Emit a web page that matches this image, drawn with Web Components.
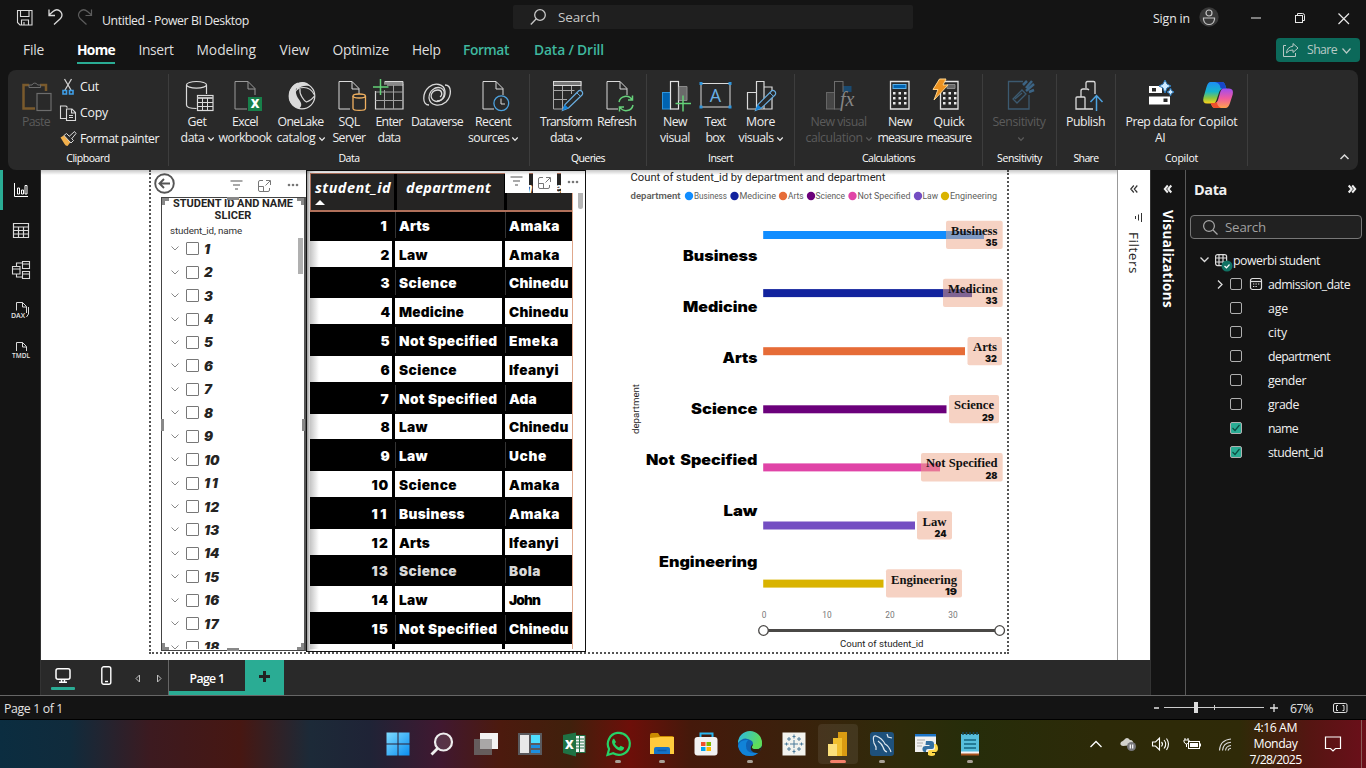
<!DOCTYPE html>
<html lang="en">
<head>
<meta charset="utf-8">
<title>Untitled - Power BI Desktop</title>
<style>
html,body{margin:0;width:1366px;height:768px;overflow:hidden;background:#141414}
body{font-family:"Open Sans","Noto Sans",sans-serif;color:#f2f2f2}
</style>
</head>
<body>
<pbi-app></pbi-app>
<script>
const BASE = `*{box-sizing:border-box}svg{display:block;overflow:visible;flex:none}`;
function define(name, css, html, setup) {
  const t = document.createElement('template');
  customElements.define(name, class extends HTMLElement {
    connectedCallback() {
      if (this.shadowRoot) return;
      const root = this.attachShadow({mode: 'open'});
      t.innerHTML = `<style>${BASE}${css}</style>` + (typeof html === 'function' ? html(this) : html);
      root.appendChild(t.content.cloneNode(true));
      if (setup) setup(this, root);
    }
  });
}

/* ---------- icons ---------- */
const W = 'stroke="#dadada" fill="none"';
const doc = (c = '#dadada') => `<path d="M17 29H6V1.500h13l7 7V15M19 1.500V9h7" fill="none" stroke="${c}"/>`;
const pencil = (x, y) => `<g transform="translate(${x} ${y})"><path d="M0 20l2.500-6L15.500 1a2.300 2.300 0 0 1 4 3.500L6 17.500z" fill="#292929" stroke="#6aaee0" stroke-width="1.200"/><path d="M0 20l2.300-6 3.700 3.600z" fill="#1483d8"/><path d="M14.500 2.500l3.500 3.300" stroke="#6aaee0"/></g>`;
const calc = (x, top) => `<path d="M${x} 1.500h${25 - x}V29H${x}z" fill="none" stroke="#e4e4e4" stroke-width="1.300"/>${top}${[12, 17, 22].map(y => [0, 5.500, 11].map(d => `<rect x="${x + 2.500 + d}" y="${y}" width="2.500" height="2.500" fill="#e8e8e8"/>`).join('')).join('')}`;
const ICONS = {
  paste: `<path d="M9 5H3.500v23.500H15M20 5h6v6" fill="none" stroke="#7a5a2c" stroke-width="2.500"/><path d="M9 7.500V5h3a3 3 0 0 1 5.600 0h3v2.500z" fill="#292929" stroke="#6d6d6d"/><rect x="17" y="13.500" width="14" height="17" fill="#292929" stroke="#6d6d6d" stroke-width="1.200"/>`,
  getdata: `<g fill="none" stroke="#dadada" stroke-width="1.200"><ellipse cx="15.500" cy="4.800" rx="10" ry="3.300"/><path d="M5.500 5v20c0 2 4 3.500 10 3.500M25.500 5v9"/></g><rect x="16.500" y="15.500" width="15.500" height="15" fill="#292929" stroke="#dadada" stroke-width="1.200"/><path d="M16.500 18h15.500" stroke="#bbb" stroke-width="2"/><path d="M16.500 22.500H32M16.500 26.500H32M21.500 18v12M26.500 18v12" stroke="#dadada"/>`,
  excel: doc('#9a9a9a').replace('M17 29H6', 'M18 29H6') + `<rect x="19" y="17" width="14" height="14" fill="#17804a"/><text x="26" y="28.300" text-anchor="middle" font-family="Open Sans" font-weight="800" font-size="12" fill="#fff">X</text>`,
  onelake: `<circle cx="17" cy="16" r="12.800" fill="none" stroke="#dadada" stroke-width="1.200"/><path d="M13 2.500c-3 6-3 12 1 17 3 4 3 7 0 9C7 27 3.500 22 4 15c.5-6 4-11 9-12.500zM10 5c3-3 8-4 12-2l3 3c-5-1-10 0-13 4z" fill="#dadada"/><path d="M10 12c3-5 14-8 19.500 3M15 9c-1 5 4 12 6.500 13 3-1 6-3 8-6" fill="none" stroke="#dadada" stroke-width="1.200"/>`,
  sql: doc() + `<g fill="#292929" stroke="#f0b060" stroke-width="1.300"><path d="M20 16v12.500c0 2.500 12.500 2.500 12.500 0V16"/><ellipse cx="26.200" cy="16" rx="6.200" ry="2"/></g>`,
  enter: `<path d="M2.500 11v18h27.500V5H14" fill="none" stroke="#dadada" stroke-width="1.200"/><path d="M11 3h19" stroke="#8a8a8a" stroke-width="3.500"/><path d="M12 1.500h18V5" ${W}/><path d="M2.500 12H30M2.500 20.500H30M11.500 10v19M20.500 5v24" stroke="#a0a0a0"/><path d="M7.500-1v16M0 7h15.500" stroke="#63d177" stroke-width="1.500"/>`,
  dataverse: `<g fill="none" stroke="#dadada" stroke-width="1.300"><path d="M8 25C1 25 1 13 8 7c6-5 15-3 16 4 1 8-7 13-12 9-4-4-1-10 5-10 4 0 5 5 2 7"/><path d="M24 5c7 0 7 11 1 17-6 5-16 4-17-4C8 11 14 6 20 8c6 3 3 13-4 13"/></g>`,
  recent: doc() + `<circle cx="24.300" cy="23.300" r="7.400" fill="#292929" stroke="#4ea3e0" stroke-width="1.300"/><path d="M24 18.500V24h4" stroke="#dadada" fill="none"/>`,
  transform: `<path d="M13 29H3.500V1.500H31V11M3.500 10.500h21M3.500 19.500H17M12.500 5v24M21.500 5v9" fill="none" stroke="#a8a8a8"/><rect x="3.500" y="1.500" width="27.500" height="4" fill="#777" stroke="#dadada"/>` + pencil(12.500, 10.500),
  refresh: doc() + `<g fill="none" stroke="#66d07a" stroke-width="1.500"><path d="M18 22a7 7 0 0 1 13-2M32 25a7 7 0 0 1-13 2M31.500 15.500V20H27M18.500 31.500V27H23"/></g>`,
  newvisual: `<rect x="3.500" y="12.500" width="8" height="16.500" fill="#0063b1" stroke="#2e95dd"/><rect x="11.500" y="1.500" width="8" height="27.500" fill="#292929" stroke="#e4e4e4" stroke-width="1.200"/><path d="M20 6.500h8v14h-8z" fill="#6a6a6a" stroke="#8a8a8a"/><path d="M24 15.500v16M16.500 23.500h15.500" stroke="#63d177" stroke-width="1.500"/>`,
  textbox: `<rect x="2" y="3.500" width="29" height="23.500" fill="none" stroke="#dadada"/><g fill="#2e95dd"><rect x=".5" y="2" width="3" height="3"/><rect x="29.500" y="2" width="3" height="3"/><rect x=".5" y="25.500" width="3" height="3"/><rect x="29.500" y="25.500" width="3" height="3"/></g><text x="16.500" y="22" text-anchor="middle" font-size="18" font-family="Open Sans" fill="#6ab0e6">A</text>`,
  morevisuals: `<g fill="none" stroke="#dadada" stroke-width="1.200"><path d="M2.500 12.500h9V29h-9zM11.500 1.500h7.500V29h-7.500zM19 7h8v22h-8"/></g>` + pencil(10.500, 10.500),
  visualcalc: `<path d="M20 6h8.500v8H20z" fill="#1a4a70"/><rect x="3.500" y="12.500" width="8" height="16.500" fill="#464646" stroke="#666"/><rect x="11.500" y="1.500" width="8.500" height="27.500" fill="#292929" stroke="#6d6d6d"/><path d="M16 12h16v20H18z" fill="#292929"/><text x="17" y="26" font-family="Liberation Serif" font-style="italic" font-size="20" fill="#858585">fx</text>`,
  measure: calc(6.500, `<rect x="9" y="4.500" width="13" height="4" fill="#0063b1" stroke="#57aee8"/>`),
  quick: calc(7.500, `<path d="M14 4.500h8v4h-8z" fill="#666" stroke="#888"/>`) + `<path d="M6.500-1H13l-3 6h5L1 20l4-10.500H0z" fill="#ec9220" stroke="#ffd48a"/>`,
  sensitivity: `<g fill="none" stroke="#3c5a70" stroke-width="1.300"><path d="M20 1.500H5.500V29H26V15"/><path d="M10 19l9-9 4 4-9 9zM12 19l7-6"/></g><path d="M20 5l4-4M23 8l6-7M23 11l8-7M26 12l5-2" stroke="#3c6484" stroke-width="2.500"/>`,
  publish: `<g fill="none" stroke="#dadada" stroke-width="1.300"><path d="M6 18q0-1 1-1h7q1 0 1 1v11H6zM11 17v-6q0-2 2-2h4q1 0 2 1M16 8V3q0-1.500 1.500-1.500h6q1.500 0 1.500 1.500v11M15 29h8"/></g><path d="M26.500 31V16M20.500 22l6-6.500 6 6.500" fill="none" stroke="#4ea3e0" stroke-width="1.500"/>`,
  prep: `<path d="M5 6h13v7H5zM5 16.500h21v8H5z" fill="#fff"/><path d="M8 8h4v3.500H8zM19.500 18.500h4V22h-4z" fill="#292929"/><path d="M21 0l2 4 4 2-4 2-2 5-2-5-4-2 4-2z" fill="#cfeaff" stroke="#2876b8"/><path d="M26.500 8l1 2.500 2.500 1.500-2.500 1.500-1 2.500-1-2.500-2.500-1.500 2.500-1.500z" fill="#cfeaff" stroke="#2876b8"/>`,
  copilot: `<defs><linearGradient id="ca" x1="0" y1="0" x2="0" y2="1"><stop stop-color="#1d8df5"/><stop offset=".45" stop-color="#17b5c9"/><stop offset=".75" stop-color="#8cc63f"/><stop offset="1" stop-color="#ffd21c"/></linearGradient><linearGradient id="cb" x1="0" y1="0" x2="0" y2="1"><stop stop-color="#a04df0"/><stop offset=".5" stop-color="#ef5aa0"/><stop offset="1" stop-color="#ffa24c"/></linearGradient></defs><path d="M8.500 2H20q2.500 0 3.500 4l1 3h-4q-2.500 0-3.500 3.500L14.500 20q-1.200 3.500-3.500 3.500H5q-5 0-3.500-6L4.500 7Q6 2 8.500 2z" fill="url(#ca)"/><path d="M13 2h7q2.500 0 3.500 4l1 3h-4l-2-1q-.5-5-5.500-6z" fill="#1747c9"/><path d="M23.500 28H13q-2.500 0-3.500-3l-.7-2h3.500q3 0 4-4l2-7q1-3.500 3.500-3.500H27q5 0 3.700 6L28 23q-1.500 5-4.500 5z" fill="url(#cb)"/><path d="M19 28h-6q-2.500 0-3.500-3l-.7-2h3.500q1.700 0 2.700-1 0 4 4 6z" fill="#f0502c"/>`,
};

/* text whose advance is tuned to a given length along its writing direction */
class UiText extends HTMLElement {
  connectedCallback() {
    if (this.shadowRoot) return;
    this.attachShadow({mode: 'open'}).innerHTML = `<style>:host{display:inline-block;white-space:pre}</style><slot></slot>`;
    const w = parseFloat(this.getAttribute('w'));
    if (!w) return;
    const r = document.createRange(); r.selectNodeContents(this);
    const b = r.getBoundingClientRect(), n = this.textContent.length;
    const now = getComputedStyle(this).writingMode.startsWith('vertical') ? b.height : b.width;
    this.style.letterSpacing = ((w - now) / n).toFixed(3) + 'px';
  }
}
const T = (s, w, st = '') => `<ui-text w="${w}" style="${st}">${s}</ui-text>`;

/* ---------- title bar ---------- */
define('title-bar', `
:host{display:flex;height:34px;align-items:center;background:#141414;font-size:12.300px;color:#e8e8e8}
.l{display:flex;align-items:center;width:513px;padding-left:17px}
.search{display:flex;align-items:center;width:400px;height:24px;margin-top:0;background:#1f1f1f;border-radius:2px;padding-left:17px;font-size:13.500px;gap:11px;color:#c8c8c8}
.r{display:flex;align-items:center;padding-left:240px}`,
`<div class="l">
<svg width="16" height="16" style="margin-top:1px" fill="none" stroke="#dadada" stroke-width="1.100"><path d="M.5.500h14.500v14.500H3L.5 12.500zM3.500.500v6h8.500v-6M4.500 15v-5h7v5M7 12v3"/></svg>
<svg width="15" height="16" style="margin-left:15px" fill="none" stroke="#dadada" stroke-width="1.300"><path d="M1 .500v6h6M1 6L5 2.500q4-3.500 7.500 0 3 3.500 0 7L6 15.500"/></svg>
<svg width="15" height="16" style="margin-left:15px" fill="none" stroke="#5c5c5c" stroke-width="1.200"><path d="M13.500.500v6h-6M13.500 6l-4-3.500q-4-3.500-7.500 0-3 3.500 0 7l6.500 6"/></svg>
<div style="margin:7px 0 0 9px">${T('Untitled - Power BI Desktop', 147)}</div></div>
<div class="search"><svg width="17" height="17" fill="none" stroke="#c8c8c8" stroke-width="1.300"><circle cx="10" cy="6" r="5.300"/><path d="M6.300 9.800L.8 15.500"/></svg>${T('Search', 42)}</div>
<div class="r">${T('Sign in', 37, 'margin-top:2px')}
<svg width="20" height="20" style="margin-left:9px"><circle cx="10" cy="10" r="9.700" fill="#383838"/><g fill="none" stroke="#c4c4c4" stroke-width="1.200"><circle cx="10" cy="6" r="3"/><path d="M4.500 11h11v1.500q-1 5-5.500 5t-5.500-5z"/></g></svg>
<svg width="10" height="10" style="margin:2px 0 0 32px"><path d="M0 5h10" stroke="#e8e8e8"/></svg>
<svg width="10" height="10" style="margin:2px 0 0 34px" fill="none" stroke="#e8e8e8"><rect x=".5" y="2.500" width="7" height="7"/><path d="M2.500 2.500v-2h5q2 0 2 2v5h-2"/></svg>
<svg width="11" height="11" style="margin:2px 0 0 33px"><path d="M.5.500l10.500 10.500M11 .500L.5 11" stroke="#e8e8e8" stroke-width="1.200"/></svg></div>`);

/* ---------- menu ---------- */
define('menu-bar', `
:host{display:flex;height:36px;align-items:flex-start;background:#141414;font-size:13.800px;line-height:18px;color:#dedede;position:relative}
nav{display:grid;grid-template-columns:54px 61.500px 58px 83px 53px 79.500px 51px 71px 80px 1fr;padding:7px 0 0 23px;width:1276px}
nav>div{display:flex}
.on span{border-bottom:2px solid #2aac94;height:23px;font-weight:700;color:#fff}.g{color:#3fb89f;font-weight:600}
.share{display:flex;align-items:center;width:84px;height:24px;margin-top:4px;background:#0c695a;border-radius:4px;padding-left:7px;font-size:12.300px;color:#b9c9c5}`,
`<nav><div>${T('File', 21)}</div><div class="on"><span>${T('Home', 38)}</span></div><div>${T('Insert', 35)}</div><div>${T('Modeling', 59.500)}</div><div>${T('View', 30)}</div><div>${T('Optimize', 56.500)}</div><div>${T('Help', 28.500)}</div><div class="g">${T('Format', 46)}</div><div class="g">${T('Data / Drill', 70)}</div></nav>
<div class="share"><svg width="16" height="14" fill="none" stroke="#b9c9c5"><path d="M3 2.500H.5v11h12V10M10 .500l5 4.500-5 4.500V7Q6 6.500 3.500 10 4 4 10 3.200z"/></svg><span style="margin-left:8px">${T('Share', 30)}</span><svg width="9" height="6" style="margin:1px 0 0 5px"><path d="M.5.500l4 4.500 4-4.500" fill="none" stroke="#b9c9c5" stroke-width="1.200"/></svg></div>`);

/* ---------- ribbon ---------- */
const CH = `<svg width="6" height="4" style="display:inline-block;margin:2px 0 0 3px"><path d="M.3.500L3 3.300 5.700.500" fill="none" stroke="currentColor" stroke-width="1.200"/></svg>`;
define('ribbon-button', `
:host{display:flex;flex-direction:column;align-items:center;padding-top:10px;font-size:12.300px;line-height:16px;color:#ededed;white-space:nowrap}
:host([off]){color:#5b5b5b}svg.i{margin-bottom:2px}.t{display:flex;justify-content:center;align-items:center;width:0;height:16px}`,
el => {
  const lines = el.getAttribute('text').split('|').map(s => {
    const [t, w] = s.split(':'); return `<div class="t">${t === 'v' ? CH : T(t.replace('^', ''), w) + (t.endsWith('^') ? CH : '')}</div>`; }).join('');
  return `<svg class="i" width="32" height="32" viewBox="0 0 32 32">${ICONS[el.getAttribute('icon')]}</svg>${lines}`;
});
define('ribbon-group', `
:host{display:flex;flex-direction:column;border-right:1px solid #3d3d3d;height:92px;margin-top:4px}
.b{display:flex;height:77px;margin-top:-4px}.n{height:15px;font-size:10.500px;line-height:15px;text-align:center;color:#fff;margin-top:4px;font-weight:500}`,
el => `<div class="b"><slot></slot></div><div class="n">${T(el.getAttribute('name'), el.getAttribute('nw'))}</div>`);
const B = (w, icon, text, off = '') => `<ribbon-button ${off} style="width:${w}px" icon="${icon}" text="${text}"></ribbon-button>`;
const G = (w, pad, name, nw, inner) => `<ribbon-group style="width:${w}px" name="${name}" nw="${nw}"><div style="width:${pad}px;flex:none"></div>${inner}</ribbon-group>`;
define('ribbon-bar', `
:host{display:flex;height:100px;margin:0 8px;background:#292929;border-radius:8px}
.small{display:flex;flex-direction:column;font-size:12.300px;padding-top:4px;line-height:26px}.small div{display:flex;align-items:center;height:26px}
.small svg{margin-right:4px}.c{margin:84px 0 0 92px}`,
G(161, 8, 'Clipboard', 43.500, B(40, 'paste', 'Paste:28', 'off') + `<div class="small" style="margin-left:4px">
<div><svg width="16" height="16"><g fill="none"><path d="M4.500 0L11 11M11.500 0L5 11" stroke="#cfcfcf" stroke-width="1.300"/><path d="M3 11.500h3.500V15H3zM9.500 11.500H13V15H9.500z" stroke="#3f9fe8" stroke-width="1.600"/></g></svg>${T('Cut', 19)}</div>
<div><svg width="16" height="16" fill="none" stroke="#dadada" stroke-width="1.100"><path d="M7 13.500H.5V1H6l1.500 1.500"/><path d="M6.500 4H12l3.500 3.500V15.500h-9zM11.500 4v4h4M9 10.500h4M9 12.500h4"/></svg>${T('Copy', 28)}</div>
<div><svg width="16" height="16"><path d="M.5 6.500L4.500 4l6.500 6.500-3.500 4.500q-2 0-3-2z" fill="#f2b04c"/><path d="M4 4.500l2.500-2 7 7-2.500 2.500z" fill="#292929" stroke="#dadada"/><path d="M9 5.500L14.500.500l1.500 2L11.500 8" fill="#292929" stroke="#dadada"/></svg>${T('Format painter', 79)}</div></div>`)
+ G(361, 8, 'Data', 21, B(40, 'getdata', 'Get:19|data^:24') + B(56, 'excel', 'Excel:26|workbook:53') + B(55, 'onelake', 'OneLake:46|catalog^:39') + B(42, 'sql', 'SQL:21|Server:33') + B(38, 'enter', 'Enter:27|data:23') + B(58, 'dataverse', 'Dataverse:52') + B(54, 'recent', 'Recent:36|sources^:41'))
+ G(117, 8, 'Queries', 34, B(56, 'transform', 'Transform:52|data^:23') + B(45, 'refresh', 'Refresh:39'))
+ G(148, 8, 'Insert', 25, B(40, 'newvisual', 'New:24|visual:30') + B(40, 'textbox', 'Text:21|box:19') + B(51, 'morevisuals', 'More:29|visuals^:35'))
+ G(188, 7, 'Calculations', 53, B(73, 'visualcalc', 'New visual:56|calculation^:57', 'off') + B(50, 'measure', 'New:24|measure:45') + B(48, 'quick', 'Quick:31|measure:45'))
+ G(74, 7, 'Sensitivity', 45, B(58, 'sensitivity', 'Sensitivity:53|v', 'off'))
+ G(59, 7, 'Share', 25, B(43, 'publish', 'Publish:39'))
+ G(132, 6, 'Copilot', 33, B(76, 'prep', 'Prep data for:69|AI:10') + B(40, 'copilot', 'Copilot:39'))
+ `<svg class="c" width="9" height="6"><path d="M.5 5l4-4 4 4" fill="none" stroke="#dadada" stroke-width="1.500"/></svg>`);

/* ---------- left rail ---------- */
define('view-rail', `
:host{display:flex;flex-direction:column;width:41px;height:525px;background:#141414;border-right:1px solid #333}
div{height:40px;display:flex;align-items:center;justify-content:center}.on{border-left:3px solid #2aac94;padding-right:2px}div+div{padding-left:1px}`,
`<div class="on"><svg width="14" height="14" fill="none" stroke="#fff"><path d="M.5 0v13.500H14M3.500 5h2v6h-2zM7.500 7h2v4h-2zM11 2.500h2V11h-2z"/></svg></div>
<div><svg width="16" height="15" fill="none" stroke="#dadada" stroke-width="1.200"><path d="M.5.500h15v14H.5zM.5 4h15M.5 7.500h15M.5 11h15M5.500 4v10.500M10.500 4v10.500"/></svg></div>
<div><svg width="18" height="18" fill="none" stroke="#dadada" stroke-width="1.100"><path d="M.5 5.500h7.500V13H.5zM.5 8H8M10.500.500h7V7.500h-7zM10.500 3h7M10.500 10.500h7v7h-7zM10.500 13h7M4.500 5V2h6M4.500 13v3h6"/></svg></div>
<div><svg width="18" height="18" fill="none" stroke="#dadada"><path d="M4.500 9.500V1.500h6l4 4V12M10.500 1.500V6h4M16.500 6v7l-2 3"/><text x="-1" y="16.500" font-size="7" stroke="none" fill="#e4e4e4" textLength="14" font-weight="600">DAX</text></svg></div>
<div><svg width="18" height="18" fill="none" stroke="#dadada"><path d="M4.500 10V1.500h6l4 4V10M10.500 1.500V6h4"/><text x="0" y="17" font-size="7" stroke="none" fill="#e4e4e4" textLength="18" lengthAdjust="spacingAndGlyphs" font-weight="600">TMDL</text></svg></div>`);

/* ---------- slicer ---------- */
const visIcons = [
`<svg width="13" height="10"><path d="M.5 1h12M3 5h7M5 9h3" stroke="#555" stroke-width="1.100"/></svg>`,
`<svg width="13" height="12" fill="none" stroke="#777"><path d="M5 .500H2q-1.500 0-1.500 1.500v8q0 1.500 1.500 1.500h8q1.500 0 1.500-1.500V8M8 .500h4.500V5M12 1L7.500 5.500M.5 6.500h5v5"/></svg>`,
`<svg width="12" height="4" fill="#777"><circle cx="2" cy="2" r="1.300"/><circle cx="6" cy="2" r="1.300"/><circle cx="10" cy="2" r="1.300"/></svg>`];
define('data-slicer', `
:host{display:flex;flex-direction:column;width:155px;color:#252423}
.top{display:flex;align-items:center;height:27px;padding-left:3px}
.top>svg:nth-child(1){margin-right:55px}
.box{position:relative;margin-left:10px;width:145px;height:454px;border:1px solid #444;border-right:2px solid #555;background:#fff;font-family:Roboto,sans-serif}
h3{margin:0;font-size:11px;line-height:12px;font-weight:700;text-align:center}
.f{font-size:9.800px;line-height:11px;margin:3px 0 0 8px;color:#333}
.list{overflow:hidden;margin-top:1px;height:412px}
.row{display:flex;align-items:center;height:23.440px;padding-left:9px}
.row i{width:13px;height:13px;border:1px solid #777;margin:0 5px 0 7px;border-radius:1px}.row b{font:italic 900 13.300px Inter,sans-serif}
.h{position:absolute;width:7px;height:7px;border:0 solid #888}
.sb{position:absolute;right:1px;top:40px;width:5px;height:36px;background:#b0b0b0}`,
`<div class="top"><svg width="21" height="21" fill="none" stroke="#555" stroke-width="1.900"><circle cx="10.500" cy="10.500" r="9.300"/><path d="M16 10.500H5.500M10 6l-4.500 4.500L10 15"/></svg>
<span style="margin-top:3px">${visIcons[0]}</span><span style="margin:4px 0 0 15px">${visIcons[1]}</span><span style="margin:3px 0 0 16px">${visIcons[2]}</span></div>
<div class="box"><h3>${T('STUDENT ID AND NAME', 120)}<br>${T('SLICER', 37)}</h3><div class="f">${T('student_id, name', 72)}</div><div class="list">
${Array.from({length: 18}, (_, i) => `<div class="row"><svg width="8" height="5"><path d="M.5.500l3.500 3.500L7.500.500" fill="none" stroke="#888"/></svg><i></i><b>${T(i + 1, i < 9 ? 8 : 15.500)}</b></div>`).join('')}</div>
<div class="sb"></div>
<div class="h" style="left:0;top:0;border-width:3px 0 0 3px"></div><div class="h" style="right:0;top:0;border-width:3px 3px 0 0"></div><div class="h" style="left:65px;top:-1px;width:12px;border-top-width:3px"></div>
<div class="h" style="left:0;bottom:0;border-width:0 0 3px 3px"></div><div class="h" style="right:0;bottom:0;border-width:0 3px 3px 0"></div><div class="h" style="left:65px;bottom:-1px;width:12px;height:3px;border-bottom-width:3px"></div>
<div class="h" style="left:-1px;top:221px;height:12px;border-left-width:3px"></div><div class="h" style="right:-1px;top:221px;height:12px;border-right-width:3px"></div></div>`);

/* ---------- table ---------- */
const NW = {Arts: 31, Law: 29, Science: 58, Medicine: 65, 'Not Specified': 98.500, Business: 66, Amaka: 51, Chinedu: 59.500, Emeka: 50, Ifeanyi: 50, Ada: 28, Uche: 38, Bola: 32, John: 31};
const ROWS = 'Arts,Amaka;Law,Amaka;Science,Chinedu;Medicine,Chinedu;Not Specified,Emeka;Science,Ifeanyi;Not Specified,Ada;Law,Chinedu;Law,Uche;Science,Amaka;Business,Amaka;Arts,Ifeanyi;Science,Bola;Law,John;Not Specified,Chinedu; , '.split(';').map(r => r.split(','));
define('data-table', `
:host{display:block;position:relative;width:280px;height:482px;margin-top:0;border:1px solid #111;padding:2px 0 0 3px;background:linear-gradient(90deg,#999,#e0e0e0 3px,#fff 8px);overflow:hidden}
.g{width:263px;height:476px;overflow:hidden;border-right:1px solid #e0a88c;font:900 13.700px Inter,sans-serif}
.hd,.r{display:grid;grid-template-columns:85px 110px 1fr}
.hd{height:39px;background:#252423;border:1px solid #b0705a;border-right:0;border-bottom:2px solid #b0705a;font:italic 700 14.500px/28px "Open Sans",sans-serif;color:#fff}
.hd>div{padding-left:4px}.hd>div+div{border-left:3px solid #000;padding-left:9px;margin-left:-2px}.hd>div:last-child{padding-left:17px}
.r{height:28.800px;border-bottom:3px solid #000;background:linear-gradient(90deg,#c4c4c4,#fff 9px);color:#000}
.r>div{display:flex;align-items:center;padding:2px 0 0 4px}.r>div+div{border-left:3px solid #000;margin-left:-3px}
.r>div:first-child{justify-content:flex-end;padding:2px 6px 0 0}
.r.k{background:#000;color:#fff}.r.k>div+div{border-left:3px solid #000;box-shadow:inset 1px 0 #333}
.ov{position:absolute;width:24px;height:24px;top:-2px;background:#fff;display:flex;align-items:center;justify-content:center}
.sb{position:absolute;left:271px;top:17px;width:5px;height:21px;background:#b5b5b5;border-radius:0 0 3px 3px}`,
`<div class="g"><div class="hd"><div>${T('student_id', 76)}<svg width="10" height="5" style="margin-top:-2px"><path d="M0 5l5-5 5 5z" fill="#fff"/></svg></div><div>${T('department', 85)}</div><div>${T('name', 38)}</div></div>
${ROWS.map((r, i) => `<div class="r ${i % 2 ? '' : 'k'}" style="${i === 12 ? 'color:#d8d8d8' : ''}"><div>${i < 15 ? T(i + 1, i < 9 ? 8.500 : 17.500) : ''}</div><div>${r[0].trim() ? T(r[0], NW[r[0]]) : ''}</div><div>${r[1].trim() ? T(r[1], NW[r[1]]) : ''}</div></div>`).join('')}</div>
<div class="sb"></div><div class="ov" style="left:197.500px">${visIcons[0]}</div><div class="ov" style="left:225.500px;padding-top:4px">${visIcons[1]}</div><div class="ov" style="left:253.500px;padding-top:2px">${visIcons[2]}</div>`);

/* ---------- chart ---------- */
const S = (x, y, w, s, a = '') => `<text x="${x}" y="${y}" textLength="${w}" lengthAdjust="spacingAndGlyphs" ${a}>${s}</text>`;
const BARS = [['Business', 35, '#118dff', 984, 946, 1002.700, 951, 997.500, 683], ['Medicine', 33, '#12239e', 972, 943, 1002.700, 948, 997.500, 683], ['Arts', 32, '#e66c37', 965, 967.500, 1002, 973, 997, 722.500], ['Science', 29, '#6b007b', 946.500, 949, 999, 954, 994, 691], ['Not Specified', 28, '#e044a7', 940, 921, 1002.700, 926, 997.500, 646], ['Law', 24, '#744ec2', 915, 917, 952, 922.500, 946.500, 723.500], ['Engineering', 19, '#d9b300', 883.500, 886, 962, 891, 957, 659]];
const LEG = [[689, 694, 33], [734.500, 739.500, 36.500], [783, 788, 15.500], [811, 815.500, 29.500], [852.500, 857.500, 53], [918, 922.500, 15.500], [945, 950, 47]];
define('bar-chart', `:host{display:block;width:421px;height:482px;font-family:Roboto,sans-serif}`,
`<svg width="421" height="482" viewBox="586 170 421 482">
${S(630.500, 181, 255, 'Count of student_id by department and department', 'font-size="11.300" fill="#252423"')}
${S(630.500, 199, 50, 'department', 'font-size="9.800" font-weight="600" fill="#605e5c"')}
${LEG.map((l, i) => `<circle cx="${l[0]}" cy="196" r="4.200" fill="${BARS[i][2]}"/>` + S(l[1], 199, l[2], BARS[i][0], 'font-size="9.800" fill="#605e5c"')).join('')}
${BARS.map((b, i) => { const y = 231 + i * 58.100; return `<rect x="763.200" y="${y}" width="${b[3] - 763.200}" height="8" fill="${b[2]}"/>
<rect x="${b[4]}" y="${y - 10.300}" width="${b[5] - b[4]}" height="28.300" rx="2" fill="#eda587" fill-opacity=".5"/>
${S(b[6], y + 4, b[7] - b[6], b[0], 'font-family="Liberation Serif" font-weight="700" font-size="13" fill="#111"')}
${S(b[7] - 12, y + 15.200, 12, b[1], 'font-family="Inter" font-weight="900" font-size="9.500" fill="#111"')}
${S(b[8], 261 + i * 51, 757.500 - b[8], b[0], 'font-family="Inter" font-weight="900" font-size="14.500" fill="#000" word-spacing="2"')}`; }).join('')}
<g font-size="8.300" fill="#777" text-anchor="middle"><text x="764" y="618">0</text><text x="827" y="618">10</text><text x="890" y="618">20</text><text x="953" y="618">30</text></g>
<path d="M763 630.500h237" stroke="#4a4846" stroke-width="3"/><g fill="#fff" stroke="#4a4846" stroke-width="1.300"><circle cx="763.500" cy="630.500" r="4.800"/><circle cx="999.700" cy="630.500" r="4.800"/></g>
${S(840, 647, 83.500, 'Count of student_id', 'font-size="9.800" fill="#252423"')}
<g transform="translate(639 434) rotate(-90)">${S(0, 0, 50, 'department', 'font-size="9.800" fill="#252423"')}</g></svg>`);
define('report-canvas', `
:host{display:flex;width:1076px;height:490px;background:#fff;overflow:hidden;position:relative}
.pg{display:flex;margin-left:108px;width:860px;height:484px;border:2px dotted #555;border-top:0}
.sh{position:absolute;inset:0 0 auto 0;height:5px;background:linear-gradient(rgba(0,0,0,.22),transparent)}`,
`<div class="pg"><data-slicer></data-slicer><data-table></data-table><bar-chart></bar-chart></div><div class="sh"></div>`);

/* ---------- side panes ---------- */
const chev = (c, flip = '', w = 1.600) => `<svg width="8" height="8" style="${flip && 'transform:scaleX(-1)'}"><path d="M3.800.500L.8 4l3 3.500M7.300.500l-3 3.500 3 3.500" fill="none" stroke="${c}" stroke-width="${w}"/></svg>`;
define('filters-pane', `
:host{display:flex;flex-direction:column;align-items:center;width:33px;height:490px;background:#fff;border-left:1px solid #999;color:#252423;padding-top:15px}
.v{writing-mode:vertical-rl;font-size:13.500px;line-height:18px;margin-top:10px}`,
`${chev('#333', '', 1.200)}<svg width="9" height="9" style="margin:20px 0 0 6px"><path d="M8.500 0v9M5.500 1.500v6M2.500 3v3" stroke="#333"/></svg><div class="v">${T('Filters', 42)}</div>`);
define('viz-pane', `
:host{display:flex;flex-direction:column;align-items:center;width:35px;background:#141414;border-left:1px solid #333;padding-top:15px;color:#fff}
.v{writing-mode:vertical-rl;font-size:13.500px;line-height:18px;font-weight:700;margin:17px 1px 0 0}`,
`${chev('#eee', '', 2)}<div class="v">${T('Visualizations', 98)}</div>`);
define('check-box', `:host{display:block;width:12px;height:12px;border:1px solid #b0b0b0;border-radius:2px}:host([on]){background:#2aac94}:host(:not([on])) svg{display:none}`,
`<svg width="10" height="10"><path d="M1.500 5l2.500 2.500L8.500 2" fill="none" stroke="#0d4d42" stroke-width="1.200"/></svg>`);
define('data-pane', `
:host{display:block;width:181px;background:#141414;border-left:1px solid #5a5a5a;color:#f0f0f0}
.hd{display:flex;justify-content:space-between;align-items:center;height:38px;padding:0 10px 0 8px;font-size:14.500px;font-weight:700}
.s{display:flex;align-items:center;gap:7px;height:24px;margin:7px 4px 0;border:1px solid #777;border-radius:4px;background:#212121;color:#a0a0a0;font-size:13.300px;padding-left:12px}
.t{margin-top:9px;font-size:12.300px}.r{display:grid;grid-template-columns:16px 22px 16px 1fr;align-items:center;height:24px;padding-left:28px}
.r.h{display:flex;padding-left:14px}`,
`<div class="hd">${T('Data', 33)}${chev('#eee', 1, 2)}</div>
<div class="s"><svg width="15" height="15" fill="none" stroke="#a8a8a8" stroke-width="1.200"><circle cx="6" cy="6" r="5.400"/><path d="M10 10l4.500 4.500"/></svg>${T('Search', 41)}</div>
<div class="t"><div class="r h"><svg width="9" height="6"><path d="M.5.500l4 4 4-4" fill="none" stroke="#ddd" stroke-width="1.300"/></svg><svg width="13" height="13" style="margin-left:6px"><g fill="none" stroke="#ddd" stroke-width="1.200"><rect x=".6" y=".6" width="11" height="11" rx="2"/><path d="M.5 4h11M.5 8h11M4 .500v11M8 .500v11"/></g><circle cx="12" cy="12" r="5.500" fill="#107263"/><path d="M9.500 12l2 1.800 3-3.300" fill="none" stroke="#fff" stroke-width="1.200"/></svg><span style="margin-left:5px">${T('powerbi student', 87)}</span></div>
${[['admission_date', 82], ['age', 20], ['city', 19], ['department', 62], ['gender', 38], ['grade', 31], ['name', 30, 1], ['student_id', 55, 1]].map((f, i) => `<div class="r"><span>${i ? '' : '<svg width="6" height="9" style="margin-left:3px"><path d="M1 .500l4 4-4 4" fill="none" stroke="#ddd" stroke-width="1.300"/></svg>'}</span><check-box ${f[2] ? 'on' : ''} style="margin:-1px 0 0 0"></check-box><span>${i ? '' : '<svg width="12" height="12" fill="none" stroke="#ddd" stroke-width="1.200" style="margin-left:-2px"><rect x=".5" y=".5" width="11" height="11" rx="2"/><path d="M.5 3.500h11"/><path d="M3 6h7M3 8.500h5" stroke-dasharray="1.300 1.200"/></svg>'}</span>${T(f[0], f[1])}</div>`).join('')}</div>`);

/* ---------- page tabs and status ---------- */
define('page-tabs', `
:host{display:flex;height:35px;background:#292929;color:#fff;align-items:stretch}
.m{width:24px;margin-left:10px;display:flex;flex-direction:column;justify-content:space-between;align-items:center;padding:8px 0 5px}.m i{height:3px;width:24px;background:#2aac94;border-radius:1px}
.p{width:77px;border:solid #666;border-width:0 0 0 1px;box-shadow:inset 0 -4px #2aac94;font-size:12.300px;font-weight:600;line-height:37px;text-align:center}
.a{width:39px;background:#2aac94;display:flex;align-items:center;justify-content:center}`,
`<div class="m"><svg width="16" height="15" fill="none" stroke="#fff" stroke-width="1.500"><rect x="1" y=".8" width="14" height="10.500" rx="2"/><path d="M6.500 11v3M9.500 11v3M4 14.200h8"/></svg><i></i></div>
<svg width="11" height="19" style="margin:6px 0 0 26px" fill="none" stroke="#fff" stroke-width="1.400"><rect x=".8" y=".8" width="9" height="17.500" rx="2"/><path d="M4 15.500h3"/></svg>
<svg width="6" height="9" style="margin:14px 0 0 23px" fill="none" stroke="#c0c0c0"><path d="M4.500 1v7L1 4.500z"/></svg><svg width="6" height="9" style="margin:14px 6px 0 15px" fill="none" stroke="#c0c0c0"><path d="M1.500 1v7L5 4.500z"/></svg>
<div class="p">${T('Page 1', 35)}</div><div class="a"><svg width="11" height="11" style="margin-top:-2px"><path d="M5.500 0v11M0 5.500h11" stroke="#222" stroke-width="3"/></svg></div>`);
define('status-bar', `
:host{display:flex;height:25px;background:#141414;border-top:1px solid #666;border-bottom:1px solid #000;font-size:12.300px;align-items:center;color:#e4e4e4;padding-left:4px}
ui-text{margin-top:1px}.z{display:flex;align-items:center;margin-left:1091px}`,
`${T('Page 1 of 1', 59)}<div class="z"><svg width="124" height="12"><path d="M0 6h5M116 6h8M120 2v8" stroke="#e4e4e4" stroke-width="1.300"/><path d="M10 5.500h100M60.500 3v5" stroke="#ccc"/><rect x="40" y="0" width="4" height="11" fill="#ddd"/></svg>
<span style="margin-left:12px">${T('67%', 23)}</span><svg width="15" height="10" style="margin-left:20px" fill="none" stroke="#ddd"><rect x=".5" y=".5" width="13.500" height="9" rx="1.500"/><path d="M5 2.500H3.500v5H5M9.500 2.500H11v5H9.500"/></svg></div>`);

/* ---------- taskbar ---------- */
const TB = [
`<defs><linearGradient id="w" x2="1" y2="1"><stop stop-color="#7fdcff"/><stop offset="1" stop-color="#0a8df0"/></linearGradient></defs><path d="M.5.500h11v11H.5zM12.500.500h11v11h-11zM.5 12.500h11v11H.5zM12.500 12.500h11v11h-11z" fill="url(#w)"/>`,
`<circle cx="13.500" cy="10" r="8.500" fill="rgba(255,255,255,.12)" stroke="#eee" stroke-width="2.200"/><path d="M7.500 16.500l-6 6" stroke="#eee" stroke-width="2.800"/>`,
`<rect x="6" y="1" width="18" height="16" fill="#f2f2f2"/><rect x="0" y="7" width="18" height="16" fill="#6b6868" fill-opacity=".85"/><path d="M6 7h12v10H6z" fill="#a9a7a7"/>`,
`<rect width="24" height="22" y="1" fill="#5a5a5e"/><rect x="2" y="3" width="9" height="18" fill="#e8e8e8"/><rect x="13" y="3" width="9" height="8" fill="#4fdfff"/><rect x="13" y="13" width="9" height="3" fill="#1c8fe0"/><rect x="13" y="18" width="9" height="3" fill="#1c8fe0"/>`,
`<rect x="12" y="3.500" width="11" height="17" fill="#f4f4f4" stroke="#1f7244"/><path d="M13 7h9M13 10h9M13 13h9M13 16h9M17.500 4v16" stroke="#1f7244"/><path d="M1 3l13-2.500v24L1 21z" fill="#1f7244"/><text x="7.300" y="16.500" text-anchor="middle" font-family="Open Sans" font-weight="800" font-size="12" fill="#fff">X</text>`,
`<path d="M1.500 23l1.600-6A11 11 0 1 1 7.200 21.300z" fill="none" stroke="#25d366" stroke-width="2.200"/><path d="M8 6.500l2 3.500-1.200 1.800q1.500 2.500 4.200 3.700l1.700-1.700 3.500 1.800q-.4 3-3.200 3.200C10.500 18.500 6 13 6 9.500q.4-2.500 2-3z" fill="#25d366"/>`,
`<path d="M0 3q0-2 2-2h6l2 3h12q2 0 2 2v15H0z" fill="#c98a00"/><path d="M0 6l10-1h14v17H0z" fill="#ffcb3d"/><path d="M4 22v-5q0-2 2-2h12q2 0 2 2v5z" fill="#1473c8"/><path d="M7.500 18.500h9" stroke="#0d5aa5" stroke-width="1.500"/>`,
`<path d="M6.500 6V1.500h12V6" fill="none" stroke="#29b6f0" stroke-width="2"/><rect x=".5" y="5" width="23" height="18.500" rx="3" fill="#f2f2f2"/><path d="M7 10h4.500v4H7z" fill="#f0502c"/><path d="M12.500 10H17v4h-4.500z" fill="#7fba00"/><path d="M7 15h4.500v4H7z" fill="#00a4ef"/><path d="M12.500 15H17v4h-4.500z" fill="#ffb900"/>`,
`<defs><linearGradient id="e" x2="1" y2=".3"><stop stop-color="#2ab8e8"/><stop offset="1" stop-color="#5fdc5a"/></linearGradient></defs><circle cx="12" cy="12" r="12" fill="#0f63b5"/><path d="M0 11A12 12 0 0 1 24 11q0 6-6 6-4 0-4-2 2-3 0-6Q6 3 0 11z" fill="url(#e)"/><path d="M8 14q0 7 8 7 4 0 6-2-4 5-10 5Q2 24 0 14 2 7 10 8q-2 2-2 6z" fill="#1183d8"/><path d="M24 12q0 5-6 5-4 0-4-2 1-1 1-3-3 2-2 6 2 3 6 3 3 0 3-2 2-3 2-7z" fill="#2e210f"/><path d="M24 11q0 6-6 6-4 0-4-2 1-1 1-3 4 0 9-1z" fill="#5fdc5a"/>`,
`<rect x=".5" y=".5" width="23" height="23" fill="#f3f3ee"/><path d="M12 8v8M8 12h8M12 2.500v4M10.500 4.500h3M12 17.500v4M10.500 19.500h3M2.500 12h4M4.500 10.500v3M17.500 12h4M19.500 10.500v3M7 5v4M5 7h4M17 5v4M15 7h4M7 15v4M5 17h4M17 15v4M15 17h4" stroke="#4a7a9a"/>`,
`<path d="M12 0h9v24h-9z" fill="#d99b12"/><path d="M7 6h9v18H7z" fill="#f0bf2e"/><path d="M2 12h9v12H2z" fill="#fbe07a"/>`,
`<rect x="0" y="0" width="24" height="24" rx="3" fill="#1e517c"/><path d="M6 18V15L4 11Q2 3 6 4q6 2 9 8 4 2 6 8M8 9q4 3 5 6 1 4 4 5M17 2l1 3 4 1" fill="none" stroke="#dfe8f0" stroke-width="1.200"/>`,
`<rect x="1" y="2" width="21" height="18" fill="#f0f0f0"/><path d="M1 2h21v2.500H1z" fill="#1b74c8"/><path d="M3 8h8M3 11h6M3 14h5" stroke="#aaa"/><path d="M12 9h5q3 0 3 3v3q0 2-2 2h-4q-2 0-2 2v1h-1q-3 0-2.500-4 .5-2 3-2h4v-1h-4z" fill="#3470a2"/><path d="M20 12h2q2 1 2 5-.5 3-2.500 3H18v1h3v2q-3 2-7 0v-3q0-2 2-2h3q2 0 2-2z" fill="#ffd94a"/>`,
`<path d="M3 2h18v20H3z" fill="#57bfdc"/><path d="M3 20.500h18v3H3z" fill="#a8551c"/><path d="M3 19.500h18v2H3z" fill="#f5f5f5"/><path d="M6 8h12M6 12h12M6 16h12" stroke="#15657f" stroke-width="1.500"/><path d="M5 0v3M8.500 0v3M12 0v3M15.500 0v3M19 0v3" stroke="#164a5c" stroke-width="1.500"/>`];
define('task-bar', `
:host{display:flex;height:48px;color:#fff;background:linear-gradient(90deg,#0b2d40 0,#102b3c 70px,#3c1a20 150px,#471712 240px,#1c2a38 310px,#1f2336 370px,#401830 440px,#4c1a0e 500px,#40200c 570px,#6d0f09 630px,#45190b 690px,#3c200c 780px,#2f2b0a 900px,#262d0a 970px,#2d2a08 1100px,#2f2a08 1240px,#551512 1310px,#6b0f1a 1366px);font-size:12.300px}
.ap{display:flex;margin-left:375.500px}.ap>div{width:44px;height:48px;display:flex;flex-direction:column;align-items:center;padding-top:12px}
.ap i{width:6px;height:3px;border-radius:2px;background:#a8a096;margin-top:4px}.ap .on{background:rgba(255,255,255,.08);border-radius:4px;height:40px;margin:4px 2px 0;width:40px;padding-top:8px}.on i{width:16px;background:#f4806a}
.tr{display:flex;align-items:center;margin-left:98px}.ck{display:flex;flex-direction:column;align-items:center;width:60px;line-height:15.700px;margin-left:14px}`,
`<div class="ap">${TB.map((s, i) => `<div class="${i === 10 ? 'on' : ''}"><svg width="24" height="24">${s}</svg>${[5, 6, 8, 10, 11, 13].includes(i) ? '<i></i>' : ''}</div>`).join('')}</div>
<div class="tr"><svg width="12" height="8"><path d="M.5 7L6 1.500 11.500 7" fill="none" stroke="#fff" stroke-width="1.300"/></svg>
<svg width="16" height="14" style="margin-left:18px"><path d="M3 9Q-1 8 1 5q2-1 3-2 3-4 6 0 4 0 3 5z" fill="#d2d2cc"/><circle cx="11.500" cy="9.500" r="4.500" fill="#77777a"/><path d="M10.300 7.500v4M12.700 7.500v4" stroke="#fff" stroke-width="1.200"/></svg>
<svg width="17" height="14" style="margin-left:16px" fill="none" stroke="#fff" stroke-width="1.100"><path d="M.5 5h3l4-4v12l-4-4h-3zM9.500 5q2 2 0 4.500M12 3q3.500 4 0 8.500M14.500 1.500q4 5.500 0 11.500"/></svg>
<svg width="17" height="12" style="margin-left:15px"><rect x="4.500" y="3.500" width="11" height="7" fill="none" stroke="#fff"/><path d="M6 5h8v4H6zM15.500 5.500H17v3h-1.500z" fill="#fff"/><path d="M1 0v2M4 0v2M0 2h5v2q-1 2-2.500 2T0 4zM2.500 6v3" stroke="#fff" fill="none"/></svg>
<svg width="13" height="13" style="margin-left:18px" fill="none" stroke="#ddd" stroke-width="1.100"><path d="M.5 12.500Q1 2 12 1M3.500 12.500Q4 5 12 4.200M6.500 12.500Q7 8 12 7.500M9 12.500q.5-2 3-2.300"/></svg>
<div class="ck">${T('4:16 AM', 43)}${T('Monday', 44)}${T('7/28/2025', 52)}</div>
<svg width="16" height="16" style="margin-left:19px" fill="none" stroke="#fff" stroke-width="1.200"><path d="M.5 1h15v11.500h-5L8 15l-2.500-2.500h-5z"/></svg><div style="width:1px;height:48px;background:#8a5a58;margin-left:20px"></div></div>`);

/* ---------- application shell ---------- */
define('pbi-app', `
:host{display:flex;flex-direction:column;width:1366px;height:768px;background:#141414}
.main{display:grid;grid-template-columns:41px 1109px 35px 181px;height:525px;flex:none}.mid{display:flex;flex-direction:column}.cv{display:flex}`,
`<title-bar></title-bar><menu-bar></menu-bar><ribbon-bar></ribbon-bar>
<div class="main"><view-rail></view-rail><div class="mid"><div class="cv"><report-canvas></report-canvas><filters-pane></filters-pane></div><page-tabs></page-tabs></div><viz-pane></viz-pane><data-pane></data-pane></div>
<status-bar></status-bar><task-bar></task-bar>`);
customElements.define('ui-text', UiText);
</script>
</body>
</html>
